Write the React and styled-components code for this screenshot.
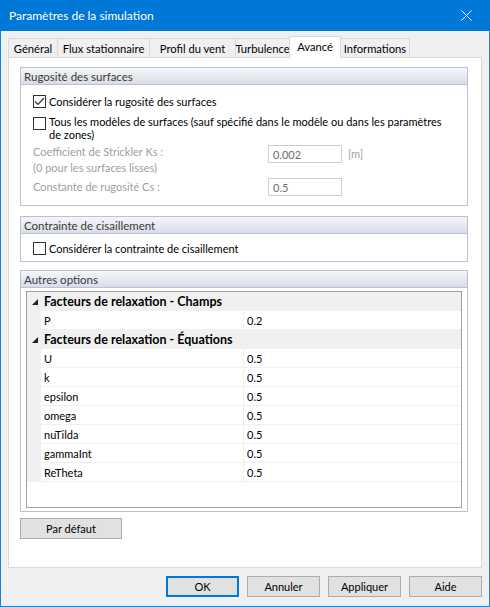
import React from "react";
import styled, { createGlobalStyle } from "styled-components";

const Global = createGlobalStyle`
  html, body { margin: 0; padding: 0; background: #fff; }
  body { font-family: Lato, "Liberation Sans", Arial, sans-serif; font-size: 11px; color: #000; }
  * { box-sizing: border-box; }
`;

const Window = styled.div`
  width: 490px;
  height: 607px;
  display: flex;
  flex-direction: column;
  border: 1px solid #1883d7;
  border-top: none;
  background: #f0f0f0;
`;

const TitleBar = styled.div`
  height: 31px;
  flex: none;
  margin: 0 -1px;
  background: #0078d7;
  color: #fff;
  display: flex;
  align-items: center;
  justify-content: space-between;
  padding: 0 18px 0 9px;
  font-size: 12px;
`;

const Body = styled.div`
  flex: 1;
  display: flex;
  flex-direction: column;
  padding: 5px 7px 0 7px;
`;

const TabRow = styled.div`
  display: flex;
  align-items: flex-start;
  height: 21px;
  flex: none;
  position: relative;
  z-index: 1;
`;

const Tab = styled.div`
  height: ${p => (p.active ? "22px" : "19px")};
  margin-top: ${p => (p.active ? "0" : "2px")};
  width: ${p => p.w}px;
  padding: ${p => (p.active ? "0 0 3px" : "0")};
  display: flex;
  align-items: center;
  justify-content: center;
  font-size: 11.2px;
  background: ${p => (p.active ? "#fff" : "#f0f0f0")};
  border: 1px solid #d9d9d9;
  border-bottom: none;
  margin-left: ${p => (p.first ? "0" : "-1px")};
  white-space: nowrap;
`;

const Panel = styled.div`
  height: 511px;
  flex: none;
  background: #fff;
  border: 1px solid #d9d9d9;
  padding: 9px 13px 0 11px;
  display: flex;
  flex-direction: column;
`;

const Group = styled.div`
  flex: none;
  border: 1px solid #b9c1d3;
  margin-bottom: ${p => p.gap || 0}px;
`;

const GroupHeader = styled.div`
  height: 17px;
  padding-left: 3px;
  display: flex;
  align-items: center;
  font-size: 11.5px;
  color: #3a3a3a;
  background: linear-gradient(#f5f6f9, #d9dde8);
  border-bottom: 1px solid #b9c1d3;
`;

const GroupContent = styled.div`
  padding: ${p => p.pad};
`;

const CheckRow = styled.div`
  display: flex;
  align-items: flex-start;
  gap: 3px;
  height: ${p => p.h || 13}px;
  line-height: 13px;
  white-space: nowrap;
  margin-bottom: ${p => p.mb || 0}px;
`;

const Box = styled.span`
  flex: none;
  width: 13px;
  height: 13px;
  border: 1px solid #333;
  background: #fff;
  display: flex;
  align-items: center;
  justify-content: center;
  margin-top: ${p => p.mt || 0}px;
`;

const FieldGrid = styled.div`
  display: grid;
  grid-template-columns: 229px 74px auto;
  grid-template-rows: 32px 19px;
  column-gap: 6px;
  row-gap: 1px;
  align-items: start;
  color: #a0a0a0;
`;

const FieldLabel = styled.div`
  line-height: 16px;
  height: 16px;
  padding-top: ${p => p.pt || 0}px;
  box-sizing: content-box;
`;

const Input = styled.div`
  height: 18px;
  margin-top: 1px;
  border: 1px solid #cfcfcf;
  color: #6d6d6d;
  padding-left: 4px;
  display: flex;
  align-items: center;
`;

const Unit = styled.span`
  line-height: 20px;
`;

const Grid = styled.div`
  height: 217px;
  border: 1px solid #a0a0a0;
  background: #fff;
`;

const GridRow = styled.div`
  display: grid;
  grid-template-columns: 14px 203px 1fr;
  height: 19px;
`;

const Margin = styled.div`
  background: #f0f0f0;
`;

const CatCell = styled.div`
  grid-column: 1 / 4;
  background: #f0f0f0;
  display: flex;
  align-items: center;
  gap: 6px;
  padding-left: 5px;
  font-weight: bold;
  font-size: 12.5px;
`;

const Cell = styled.div`
  display: flex;
  align-items: center;
  padding-left: 3px;
  border-bottom: 1px solid #f0f0f0;
  border-right: ${p => (p.name ? "1px solid #f0f0f0" : "none")};
`;

const Button = styled.div`
  width: ${p => p.w || 73}px;
  height: 21px;
  display: flex;
  align-items: center;
  justify-content: center;
  background: #e1e1e1;
  border: ${p => (p.primary ? "2px solid #0078d7" : "1px solid #adadad")};
`;

const Footer = styled.div`
  display: flex;
  justify-content: flex-end;
  gap: 8px;
  padding-top: 8px;
`;

const Check = () => (
  <svg width="11" height="9" viewBox="0 0 11 9">
    <path d="M1 4.5 L4 7.5 L10 1" fill="none" stroke="#333" strokeWidth="1.2" />
  </svg>
);

const Tri = () => (
  <svg width="6" height="6" viewBox="0 0 6 6">
    <polygon points="6,0 6,6 0,6" fill="#222" />
  </svg>
);

const tabs = [
  ["Général", 50],
  ["Flux stationnaire", 93],
  ["Profil du vent", 87],
  ["Turbulence", 55],
  ["Avancé", 52],
  ["Informations", 70],
];

const grid = [
  { cat: "Facteurs de relaxation - Champs", rows: [["P", "0.2"]] },
  {
    cat: "Facteurs de relaxation - Équations",
    rows: [["U", "0.5"], ["k", "0.5"], ["epsilon", "0.5"], ["omega", "0.5"], ["nuTilda", "0.5"], ["gammaInt", "0.5"], ["ReTheta", "0.5"]],
  },
];

export default function App() {
  return (
    <>
      <Global />
      <Window>
        <TitleBar>
          <span>Paramètres de la simulation</span>
          <svg width="11" height="11" viewBox="0 0 11 11">
            <path d="M0.5 0.5 L10.5 10.5 M10.5 0.5 L0.5 10.5" stroke="#fff" strokeWidth="1" />
          </svg>
        </TitleBar>
        <Body>
          <TabRow>
            {tabs.map(([t, w], i) => (
              <Tab key={t} w={w} first={i === 0} active={t === "Avancé"}>{t}</Tab>
            ))}
          </TabRow>
          <Panel>
            <Group gap={10}>
              <GroupHeader>Rugosité des surfaces</GroupHeader>
              <GroupContent pad="10px 0 9px 12px">
                <CheckRow mb={7}>
                  <Box><Check /></Box>
                  <span>Considérer la rugosité des surfaces</span>
                </CheckRow>
                <CheckRow h={26} mb={3}>
                  <Box mt={2} />
                  <span>Tous les modèles de surfaces (sauf spécifié dans le modèle ou dans les paramètres<br />de zones)</span>
                </CheckRow>
                <FieldGrid>
                  <div>
                    <FieldLabel>Coefficient de Strickler Ks :</FieldLabel>
                    <FieldLabel>(0 pour les surfaces lisses)</FieldLabel>
                  </div>
                  <Input>0.002</Input>
                  <Unit>[m]</Unit>
                  <FieldLabel pt={2}>Constante de rugosité Cs :</FieldLabel>
                  <Input>0.5</Input>
                  <span />
                </FieldGrid>
              </GroupContent>
            </Group>
            <Group gap={8}>
              <GroupHeader>Contrainte de cisaillement</GroupHeader>
              <GroupContent pad="8px 0 6px 12px">
                <CheckRow>
                  <Box />
                  <span>Considérer la contrainte de cisaillement</span>
                </CheckRow>
              </GroupContent>
            </Group>
            <Group gap={6}>
              <GroupHeader>Autres options</GroupHeader>
              <GroupContent pad="3px 5px 3px 5px">
                <Grid>
                  {grid.map(g => (
                    <React.Fragment key={g.cat}>
                      <GridRow>
                        <CatCell><Tri />{g.cat}</CatCell>
                      </GridRow>
                      {g.rows.map(([n, v]) => (
                        <GridRow key={n}>
                          <Margin />
                          <Cell name>{n}</Cell>
                          <Cell>{v}</Cell>
                        </GridRow>
                      ))}
                    </React.Fragment>
                  ))}
                </Grid>
              </GroupContent>
            </Group>
            <Button w={102}>Par défaut</Button>
          </Panel>
          <Footer>
            <Button primary>OK</Button>
            <Button>Annuler</Button>
            <Button>Appliquer</Button>
            <Button>Aide</Button>
          </Footer>
        </Body>
      </Window>
    </>
  );
}
